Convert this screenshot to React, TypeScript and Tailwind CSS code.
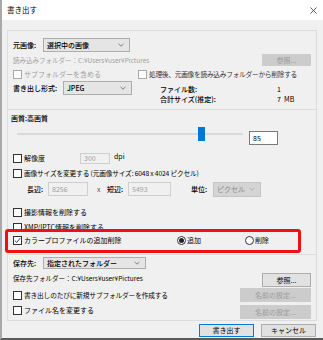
import React from "react";

const Check = ({ checked = false, disabled = false }: { checked?: boolean; disabled?: boolean }) => (
  <div
    className={`w-[9px] h-[9px] shrink-0 border bg-white flex items-center justify-center ${disabled ? "border-[#a8a8a8]" : "border-[#333]"}`}
  >
    {checked && (
      <svg width="7" height="7" viewBox="0 0 7 7">
        <path d="M0.8 3.6 L2.7 5.4 L6.2 1.2" fill="none" stroke="#222" strokeWidth="0.9" />
      </svg>
    )}
  </div>
);

const Radio = ({ checked = false }: { checked?: boolean }) => (
  <div className="w-[9px] h-[9px] shrink-0 rounded-full border border-[#333] bg-white flex items-center justify-center">
    {checked && <div className="w-[5px] h-[5px] rounded-full bg-[#222]" />}
  </div>
);

const Chevron = ({ color = "#555" }: { color?: string }) => (
  <svg width="6" height="4" viewBox="0 0 6 4" className="shrink-0">
    <path d="M0.5 0.8 L3 3.2 L5.5 0.8" fill="none" stroke={color} strokeWidth="0.7" />
  </svg>
);

const Combo = ({ w, text, disabled = false, bold = false }: { w: string; text: string; disabled?: boolean; bold?: boolean }) => (
  <div
    className={`${w} h-full flex items-center justify-between pl-[3px] pr-[5px] border ${
      disabled ? "bg-[#d4d4d4] border-[#c4c4c4] text-[#8a8a8a]" : "bg-[#e5e5e5] border-[#adadad] text-black"
    } ${bold ? "font-medium" : ""}`}
  >
    <span>{text}</span>
    <Chevron color={disabled ? "#a0a0a0" : "#555"} />
  </div>
);

const Btn = ({ w, text, disabled = false, primary = false, h = "h-[12px]" }: { w: string; text: string; disabled?: boolean; primary?: boolean; h?: string }) => (
  <div
    className={`${w} ${h} flex items-center justify-center shrink-0 border ${
      disabled
        ? "bg-[#cccccc] border-[#cccccc] text-[#9a9a9a]"
        : primary
        ? "bg-[#e1e1e1] border-[#0078d7] text-black"
        : "bg-[#e1e1e1] border-[#adadad] text-black"
    }`}
  >
    {text}
  </div>
);

const Input = ({ w, text, disabled = false }: { w: string; text: string; disabled?: boolean }) => (
  <div
    className={`${w} h-full flex items-center pl-[3px] border ${
      disabled ? "bg-[#f0f0f0] border-[#cfcfcf] text-[#a0a0a0]" : "bg-white border-[#7a7a7a] text-black"
    }`}
  >
    {text}
  </div>
);

export default function App() {
  return (
    <div
      className="relative w-[323px] h-[340px] overflow-hidden bg-[#f0f0f0] text-[7px] leading-none text-black border-l-[2px] border-l-[#a9a9a9] border-b-[2px] border-b-[#5a5a5a]"
      style={{ fontFamily: '"Noto Sans CJK JP", "Noto Sans", sans-serif' }}
    >
      {/* title bar */}
      <div className="h-[20px] bg-white flex items-center justify-between pl-[5px] pr-[6px]">
        <span className="text-[7.5px]">書き出す</span>
        <svg width="7" height="7" viewBox="0 0 7 7">
          <path d="M0.5 0.5 L6.5 6.5 M6.5 0.5 L0.5 6.5" stroke="#333" strokeWidth="0.8" />
        </svg>
      </div>

      <div className="pl-[5px] pr-[6px] pt-[10px]">
        {/* group 1 */}
        <div className="h-[79px] border-t border-x border-[#dcdcdc] pl-[5px] pr-[5px] pt-[7px] flex flex-col">
          <div className="h-[14px] flex items-center">
            <span className="w-[30px] font-medium">元画像:</span>
            <Combo w="w-[87px]" text="選択中の画像" bold />
          </div>
          <div className="h-[14px] mt-[1px] flex items-center justify-between">
            <span className="text-[#a0a0a0] text-[6.5px]">読み込みフォルダー：C:¥Users¥user¥Pictures</span>
            <Btn w="w-[49px]" text="参照..." disabled />
          </div>
          <div className="h-[12px] mt-[1px] flex items-center">
            <div className="w-[125px] flex items-center gap-[2px]">
              <Check disabled />
              <span className="text-[#a0a0a0]">サブフォルダーを含める</span>
            </div>
            <div className="flex items-center gap-[2px]">
              <Check disabled />
              <span className="text-[#333] text-[6.7px] tracking-[-0.25px]">処理後、元画像を読み込みフォルダーから削除する</span>
            </div>
          </div>
          <div className="h-[24px] mt-[1px] flex items-start">
            <div className="h-[14px] flex items-center">
              <span className="w-[50px] font-medium">書き出し形式:</span>
              <Combo w="w-[69px]" text="JPEG" bold />
            </div>
            <div className="ml-[28px] pt-[3px] flex flex-col">
              <div className="h-[10px] flex items-center">
                <span className="w-[117px] font-medium">ファイル数:</span>
                <span>1</span>
              </div>
              <div className="h-[10px] flex items-center">
                <span className="w-[117px] font-medium">合計サイズ(推定):</span>
                <span>7&nbsp;&nbsp;MB</span>
              </div>
            </div>
          </div>
        </div>

        {/* group 2 */}
        <div className="h-[146px] border border-[#dcdcdc] pl-[5px] pr-[5px] pt-[3px] flex flex-col">
          <div className="h-[10px] flex items-center -ml-[2px] font-medium">画質:高画質</div>
          <div className="h-[18px] mt-[4px] flex">
            <div className="relative w-[226px] ml-[4px] h-[14px]">
              <div className="absolute left-0 right-0 top-[6px] h-[2px] bg-[#dadada]" />
              <div className="absolute left-[181px] top-0 w-[7px] h-[14px] bg-[#0078d7]" />
            </div>
            <div className="ml-[6px] self-end h-[14px]">
              <Input w="w-[29px]" text="85" />
            </div>
          </div>
          <div className="h-[11px] mt-[8px] flex items-center">
            <Check />
            <span className="ml-[2px] w-[56px]">解像度</span>
            <Input w="w-[30px]" text="300" disabled />
            <span className="ml-[4px] -mt-[5px]">dpi</span>
          </div>
          <div className="h-[12px] mt-[3px] flex items-center">
            <Check />
            <span className="ml-[2px] text-[6.7px] tracking-[-0.15px]">画像サイズを変更する (元画像サイズ: 6048 x 4024 ピクセル)</span>
          </div>
          <div className="h-[14px] mt-[3px] flex items-center">
            <span className="ml-[14px] w-[21px] font-medium">長辺:</span>
            <Input w="w-[40px]" text="8256" disabled />
            <span className="ml-[9px] w-[10px] text-[#555]">x</span>
            <span className="w-[21px] font-medium">短辺:</span>
            <Input w="w-[43px]" text="5493" disabled />
            <span className="ml-[20px] w-[22px] font-medium">単位:</span>
            <div className="h-[15px]">
              <Combo w="w-[48px]" text="ピクセル" disabled />
            </div>
          </div>
          <div className="h-[12px] mt-[10px] flex items-center">
            <Check />
            <span className="ml-[2px]">撮影情報を削除する</span>
          </div>
          <div className="h-[12px] mt-[3px] flex items-center">
            <Check />
            <span className="ml-[2px]">XMP/IPTC情報を削除する</span>
          </div>
          <div className="h-[12px] mt-[1px] flex items-center">
            <Check checked />
            <span className="ml-[2px] w-[153px]">カラープロファイルの追加削除</span>
            <Radio checked />
            <span className="ml-[1px] w-[58px]">追加</span>
            <Radio />
            <span className="ml-[1px]">削除</span>
          </div>
        </div>

        {/* group 3 */}
        <div className="h-[66px] border-b border-x border-[#dcdcdc] pl-[5px] pr-[5px] pt-[2px] flex flex-col">
          <div className="h-[12px] flex items-center">
            <span className="w-[30px] font-medium">保存先:</span>
            <Combo w="w-[103px]" text="指定されたフォルダー" bold />
          </div>
          <div className="h-[14px] mt-[4px] flex items-center justify-between">
            <span className="text-[6.5px] -mt-[4px]">保存先フォルダー：C:¥Users¥user¥Pictures</span>
            <Btn w="w-[49px]" h="h-[14px]" text="参照..." />
          </div>
          <div className="h-[14px] mt-[1px] flex items-center justify-between">
            <div className="flex items-center gap-[2px]">
              <Check />
              <span className="text-[6.7px] tracking-[-0.15px]">書き出しのたびに新規サブフォルダーを作成する</span>
            </div>
            <Btn w="w-[71px]" h="h-[14px]" text="名前の設定..." disabled />
          </div>
          <div className="h-[14px] mt-[3px] flex items-center justify-between">
            <div className="flex items-center gap-[2px] -mt-[4px]">
              <Check />
              <span>ファイル名を変更する</span>
            </div>
            <Btn w="w-[71px]" h="h-[14px]" text="名前の設定..." disabled />
          </div>
        </div>

        {/* bottom buttons */}
        <div className="mt-[3px] flex justify-end gap-[7px] pr-[1px]">
          <Btn w="w-[55px]" h="h-[13px]" text="書き出す" primary />
          <Btn w="w-[55px]" h="h-[13px]" text="キャンセル" />
        </div>
      </div>

      {/* red highlight */}
      <div className="absolute left-[3px] top-[229px] w-[296px] h-[24px] border-[3px] border-[#ee1111] rounded-[3px]" />
    </div>
  );
}
